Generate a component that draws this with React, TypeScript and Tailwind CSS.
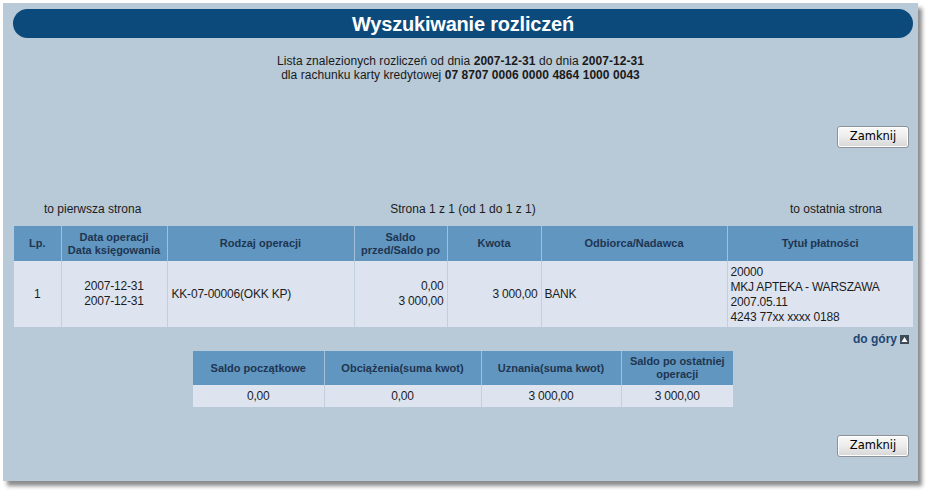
import React from "react";

const font = { fontFamily: '"Liberation Sans", Arial, sans-serif' };

function Btn() {
  return (
    <button
      className="w-[72px] h-[22px] rounded-[3px] border border-[#8d9299] bg-gradient-to-b from-[#f9f9f9] via-[#ececec] to-[#d6d6d6] text-[12px] text-black leading-none shadow-[inset_0_0_0_1px_#ffffff]"
      style={{ fontFamily: '"DejaVu Sans", sans-serif', fontSize: "11.5px" }}
    >
      Zamknij
    </button>
  );
}

const th = "border-l border-[#a3c0d8] first:border-l-0 text-[11px] font-bold text-[#1e3550] text-center align-middle leading-[13px] px-1";
const td = "border-l border-[#c3cfdd] first:border-l-0 text-[12px] text-[#1c1c1c] leading-[15px] align-middle tracking-[-0.2px]";

export default function App() {
  return (
    <div className="w-[931px] h-[496px] bg-white overflow-hidden" style={font}>
      <div className="ml-[3px] mt-[3px] w-[915px] h-[478px] bg-[#b8c9d7] shadow-[4px_5px_4px_rgba(0,0,0,0.45)] flex flex-col">
        <div className="mt-[6px] ml-[10px] mr-[5px] h-[29px] rounded-full bg-[#0c4a7b] flex items-center justify-center">
          <span className="text-white font-bold text-[20px] leading-none tracking-[-0.2px]">Wyszukiwanie rozliczeń</span>
        </div>

        <div className="mt-[16px] flex flex-col items-center text-[12px] leading-[14px] text-[#1a1a1a] tracking-[0.05px]">
          <div>
            Lista znalezionych rozliczeń od dnia <b>2007-12-31</b> do dnia <b>2007-12-31</b>
          </div>
          <div>
            dla rachunku karty kredytowej <b>07 8707 0006 0000 4864 1000 0043</b>
          </div>
        </div>

        <div className="mt-[44px] flex justify-end pr-[9px]">
          <Btn />
        </div>

        <div className="mt-[54px] h-[14px] flex items-center text-[12px] text-[#1c1c1c] leading-[14px] pl-[41px] pr-[36px]">
          <div className="flex-1">to pierwsza strona</div>
          <div className="flex-1 text-center">Strona 1 z 1 (od 1 do 1 z 1)</div>
          <div className="flex-1 text-right">to ostatnia strona</div>
        </div>

        <div className="mt-[10px] ml-[11px]">
          <table className="border-collapse table-fixed w-[899px]">
            <colgroup>
              <col className="w-[47px]" />
              <col className="w-[106px]" />
              <col className="w-[187px]" />
              <col className="w-[93px]" />
              <col className="w-[94px]" />
              <col className="w-[186px]" />
              <col className="w-[186px]" />
            </colgroup>
            <thead>
              <tr className="h-[35px] bg-[#6196c0]">
                <th className={th}>Lp.</th>
                <th className={th}>Data operacji<br />Data księgowania</th>
                <th className={th}>Rodzaj operacji</th>
                <th className={th}>Saldo<br />przed/Saldo po</th>
                <th className={th}>Kwota</th>
                <th className={th}>Odbiorca/Nadawca</th>
                <th className={th}>Tytuł płatności</th>
              </tr>
            </thead>
            <tbody>
              <tr className="h-[66px] bg-[#dde4f0]">
                <td className={td + " text-center"}>1</td>
                <td className={td + " text-center"}>2007-12-31<br />2007-12-31</td>
                <td className={td + " pl-[4px]"}>KK-07-00006(OKK KP)</td>
                <td className={td + " text-right pr-[3px]"}>0,00<br />3 000,00</td>
                <td className={td + " text-right pr-[3px]"}>3 000,00</td>
                <td className={td + " pl-[3px]"}>BANK</td>
                <td className={td + " pl-[3px] pt-[2px]"}>20000<br />MKJ APTEKA - WARSZAWA<br />2007.05.11<br />4243 77xx xxxx 0188</td>
              </tr>
            </tbody>
          </table>
        </div>

        <div className="mt-[5px] h-[14px] flex justify-end items-center pr-[9px] gap-[3px]">
          <span className="text-[12px] font-bold text-[#1d4673] leading-[14px]">do góry</span>
          <svg width="9" height="9" viewBox="0 0 9 9">
            <rect x="0" y="0" width="9" height="9" fill="#3d4a58" />
            <polygon points="4.5,2 7.5,7 1.5,7" fill="#ffffff" />
          </svg>
        </div>

        <div className="mt-[5px] ml-[190px]">
          <table className="border-collapse table-fixed w-[540px]">
            <colgroup>
              <col className="w-[131px]" />
              <col className="w-[157px]" />
              <col className="w-[140px]" />
              <col className="w-[112px]" />
            </colgroup>
            <thead>
              <tr className="h-[34px] bg-[#6196c0]">
                <th className={th}>Saldo początkowe</th>
                <th className={th}>Obciążenia(suma kwot)</th>
                <th className={th}>Uznania(suma kwot)</th>
                <th className={th}>Saldo po ostatniej operacji</th>
              </tr>
            </thead>
            <tbody>
              <tr className="h-[22px] bg-[#dde4f0]">
                <td className={td + " text-center"}>0,00</td>
                <td className={td + " text-center"}>0,00</td>
                <td className={td + " text-center"}>3 000,00</td>
                <td className={td + " text-center"}>3 000,00</td>
              </tr>
            </tbody>
          </table>
        </div>

        <div className="mt-[28px] flex justify-end pr-[9px]">
          <Btn />
        </div>
      </div>
    </div>
  );
}
